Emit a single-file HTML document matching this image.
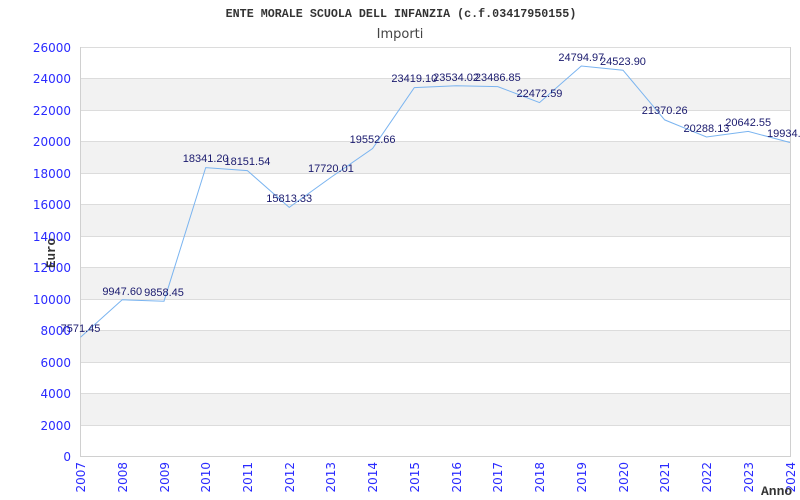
<!DOCTYPE html>
<html><head><meta charset="utf-8"><style>
html,body{margin:0;padding:0;background:#fff;width:800px;height:500px;overflow:hidden}
svg{display:block}
.yl{font:12px "DejaVu Sans","Liberation Sans",sans-serif;fill:#2a2aff;text-anchor:end}
.xl{font:12px "DejaVu Sans","Liberation Sans",sans-serif;fill:#2a2aff;text-anchor:end}
.dl{font:11px "Liberation Sans",sans-serif;fill:#1a1a6e;text-anchor:middle}
</style></head><body>
<svg width="800" height="500" xmlns="http://www.w3.org/2000/svg">
<text x="401" y="17" text-anchor="middle" style="font:bold 11.7px 'Liberation Mono',monospace;fill:#333">ENTE MORALE SCUOLA DELL INFANZIA (c.f.03417950155)</text>
<text x="400" y="38" text-anchor="middle" style="font:13px 'DejaVu Sans','Liberation Sans',sans-serif;fill:#444">Importi</text>
<g fill="#f2f2f2">
<rect x="80.5" y="78.5" width="709.5" height="31.5"/>
<rect x="80.5" y="141.5" width="709.5" height="31.5"/>
<rect x="80.5" y="204.5" width="709.5" height="31.5"/>
<rect x="80.5" y="267.5" width="709.5" height="31.5"/>
<rect x="80.5" y="330.5" width="709.5" height="31.5"/>
<rect x="80.5" y="393.5" width="709.5" height="31.5"/>
</g>
<g stroke="#dcdcdc" stroke-width="1">
<line x1="80" y1="47.5" x2="790" y2="47.5"/>
<line x1="80" y1="78.5" x2="790" y2="78.5"/>
<line x1="80" y1="110.5" x2="790" y2="110.5"/>
<line x1="80" y1="141.5" x2="790" y2="141.5"/>
<line x1="80" y1="173.5" x2="790" y2="173.5"/>
<line x1="80" y1="204.5" x2="790" y2="204.5"/>
<line x1="80" y1="236.5" x2="790" y2="236.5"/>
<line x1="80" y1="267.5" x2="790" y2="267.5"/>
<line x1="80" y1="299.5" x2="790" y2="299.5"/>
<line x1="80" y1="330.5" x2="790" y2="330.5"/>
<line x1="80" y1="362.5" x2="790" y2="362.5"/>
<line x1="80" y1="393.5" x2="790" y2="393.5"/>
<line x1="80" y1="425.5" x2="790" y2="425.5"/>
<line x1="80" y1="456.5" x2="790.5" y2="456.5" stroke="#d0d0d0"/>
<line x1="80.5" y1="47" x2="80.5" y2="457" stroke="#d0d0d0"/>
<line x1="790.5" y1="47" x2="790.5" y2="457" stroke="#d0d0d0"/>
</g>
<g class="yl">
<text x="71" y="52">26000</text><text x="71" y="83">24000</text><text x="71" y="115">22000</text>
<text x="71" y="146">20000</text><text x="71" y="178">18000</text><text x="71" y="209">16000</text>
<text x="71" y="241">14000</text><text x="71" y="272">12000</text><text x="71" y="304">10000</text>
<text x="71" y="335">8000</text><text x="71" y="367">6000</text><text x="71" y="398">4000</text>
<text x="71" y="430">2000</text><text x="71" y="461">0</text>
</g>
<g class="xl">
<text transform="translate(85,462) rotate(-90)">2007</text>
<text transform="translate(127,462) rotate(-90)">2008</text>
<text transform="translate(169,462) rotate(-90)">2009</text>
<text transform="translate(210,462) rotate(-90)">2010</text>
<text transform="translate(252,462) rotate(-90)">2011</text>
<text transform="translate(294,462) rotate(-90)">2012</text>
<text transform="translate(335,462) rotate(-90)">2013</text>
<text transform="translate(377,462) rotate(-90)">2014</text>
<text transform="translate(419,462) rotate(-90)">2015</text>
<text transform="translate(461,462) rotate(-90)">2016</text>
<text transform="translate(502,462) rotate(-90)">2017</text>
<text transform="translate(544,462) rotate(-90)">2018</text>
<text transform="translate(586,462) rotate(-90)">2019</text>
<text transform="translate(628,462) rotate(-90)">2020</text>
<text transform="translate(669,462) rotate(-90)">2021</text>
<text transform="translate(711,462) rotate(-90)">2022</text>
<text transform="translate(753,462) rotate(-90)">2023</text>
<text transform="translate(795,462) rotate(-90)">2024</text>
</g>
<text transform="translate(55,253) rotate(-90)" text-anchor="middle" style="font:bold 12.5px 'Liberation Mono',monospace;fill:#333">Euro</text>
<text x="761" y="495" style="font:bold 13px 'Liberation Mono',monospace;fill:#333">Anno</text>
<polyline fill="none" stroke="#7ab4f0" stroke-width="1" points="80.5,337.2 122.2,299.8 164,301.2 205.7,167.6 247.4,170.6 289.2,207.4 330.9,177.4 372.6,148.5 414.3,87.6 456.1,85.8 497.8,86.6 539.5,102.6 581.3,66 623,70.2 664.7,119.9 706.5,137 748.2,131.4 790,142.5"/>
<g class="dl">
<text x="80.5" y="332">7571.45</text>
<text x="122.2" y="295">9947.60</text>
<text x="164" y="296">9858.45</text>
<text x="205.7" y="162">18341.20</text>
<text x="247.4" y="165">18151.54</text>
<text x="289.2" y="202">15813.33</text>
<text x="330.9" y="172">17720.01</text>
<text x="372.6" y="143">19552.66</text>
<text x="414.3" y="82">23419.10</text>
<text x="456.1" y="81">23534.02</text>
<text x="497.8" y="81">23486.85</text>
<text x="539.5" y="97">22472.59</text>
<text x="581.3" y="61">24794.97</text>
<text x="623" y="65">24523.90</text>
<text x="664.7" y="114">21370.26</text>
<text x="706.5" y="132">20288.13</text>
<text x="748.2" y="126">20642.55</text>
<text x="790" y="137">19934.40</text>
</g>
</svg>
</body></html>
